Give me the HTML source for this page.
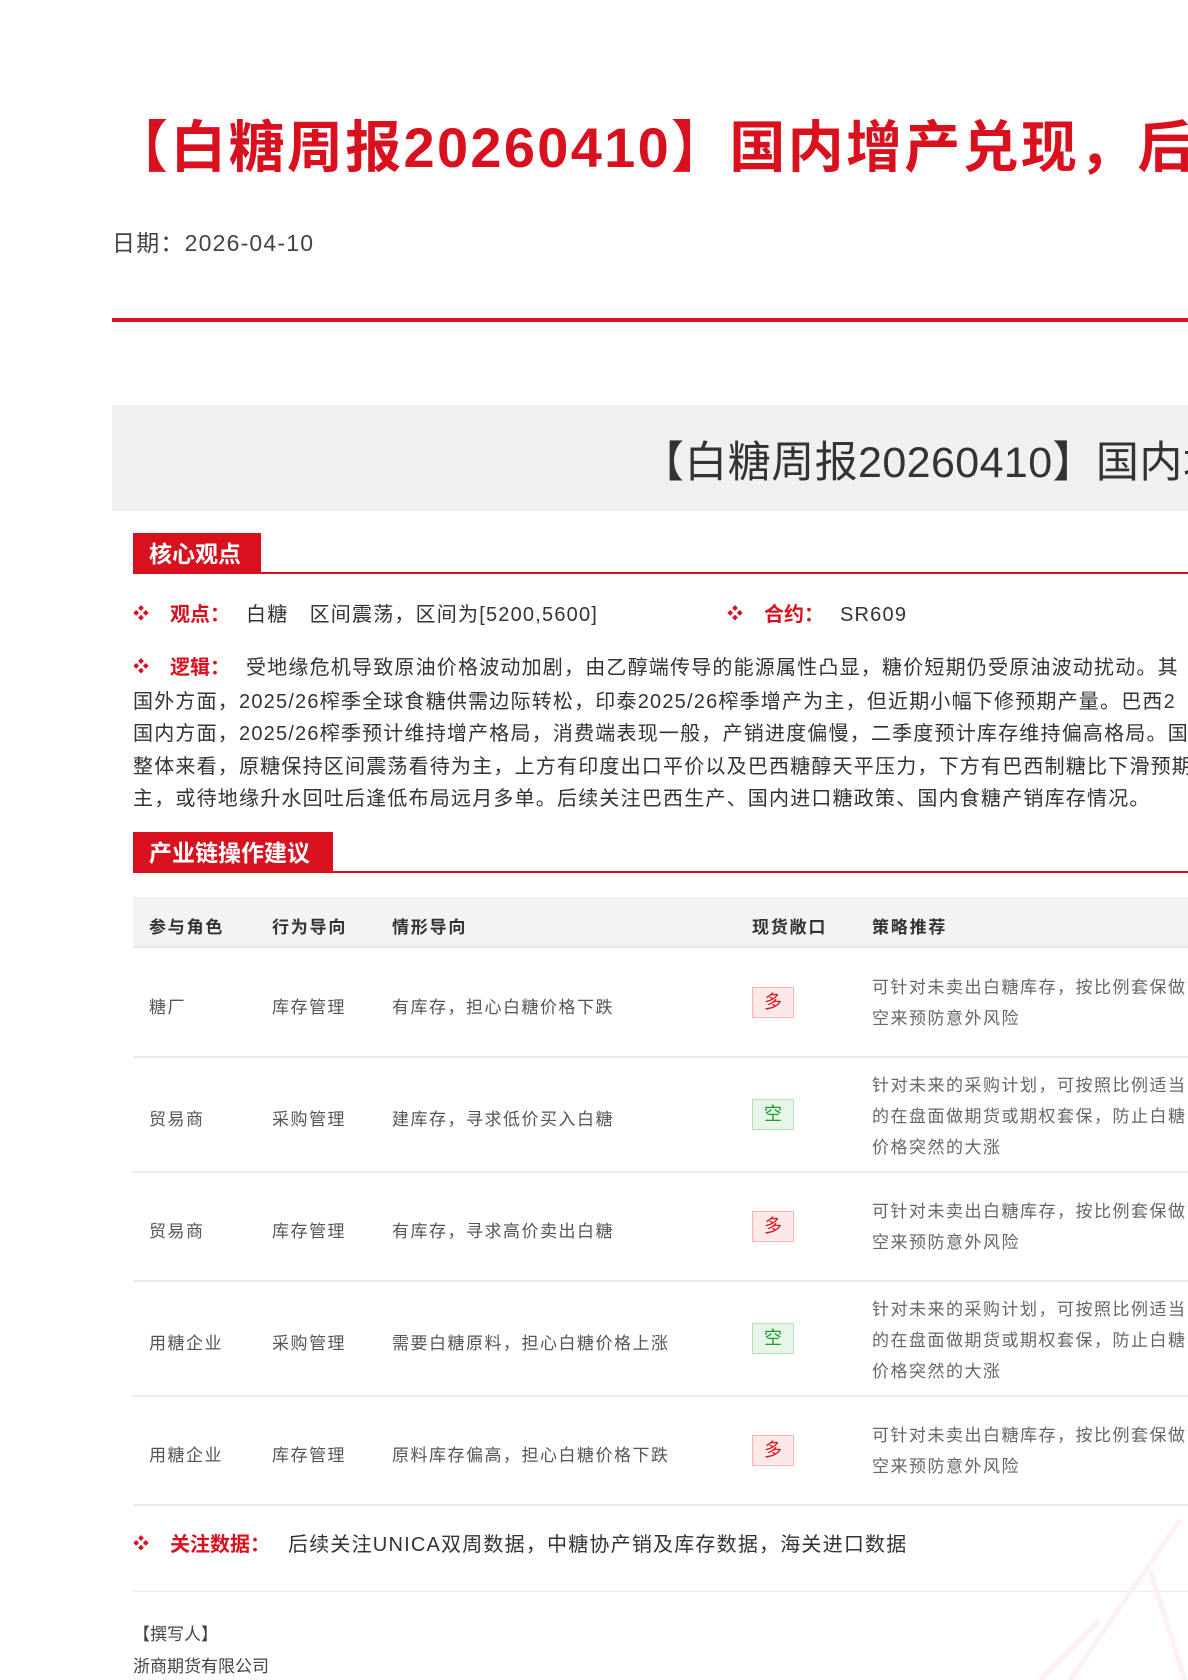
<!DOCTYPE html>
<html><head><meta charset="utf-8"><style>
*{margin:0;padding:0;box-sizing:border-box}
html,body{width:1188px;height:1680px;overflow:hidden;background:#fff}
body{position:relative;font-family:"Liberation Sans","Noto Sans CJK SC",sans-serif;color:#333}
.a{position:absolute;white-space:nowrap}
.title{left:112px;top:114px;font-size:56px;line-height:68px;font-weight:bold;color:#d9101e;letter-spacing:2.3px}
.date{left:112px;top:224px;font-size:23px;color:#444;letter-spacing:1.2px}
.rline{left:112px;top:318px;width:1100px;height:4px;background:#d9101e}
.gbox{left:112px;top:405px;width:1100px;height:106px;background:#f0f0f0}
.gtxt{left:641px;top:436px;font-size:43px;line-height:54px;color:#333;letter-spacing:0.4px}
.sec{left:133px;height:41px;background:#d9101e;color:#fff;font-size:23px;line-height:43px;padding-left:16px;font-weight:bold}
.secl{left:133px;width:1100px;height:2px;background:#d9101e}
.bul{color:#d9101e;font-size:16px;line-height:28px}
.lab{color:#d9101e;font-size:20px;font-weight:bold;line-height:28px}
.txt{font-size:20px;color:#333;line-height:28px;letter-spacing:1.2px}
.para{left:133px;top:652px;width:1100px;font-size:20px;line-height:32.3px;color:#333;letter-spacing:1.2px}
.th{top:897px;left:133px;width:1100px;height:51px;background:#f2f3f5;border-bottom:2px solid #e6e8eb}
.hd{font-size:17px;font-weight:bold;color:#333;top:913px;letter-spacing:1.8px}
.sep{left:133px;width:1100px;height:2px;background:#e8eaed}
.cell{font-size:17px;color:#555;letter-spacing:1.5px}
.st{font-size:17px;color:#666;line-height:31px;letter-spacing:1.5px}
.bd{width:42px;height:31px;font-size:18px;text-align:center;line-height:29px}
.red{background:#fde9e9;border:1px solid #f5b5b5;color:#e0101e}
.grn{background:#e8f6ea;border:1px solid #b3dfba;color:#1aa02c}
</style></head><body>
<div class="a title">【白糖周报20260410】国内增产兑现，后市关注进口利润变化</div>
<div class="a date">日期：2026-04-10</div>
<div class="a rline"></div>
<div class="a gbox"></div>
<div class="a gtxt">【白糖周报20260410】国内增产兑现，后市关注进口利润变化</div>

<div class="a sec" style="top:533px;width:128px">核心观点</div>
<div class="a secl" style="top:572px"></div>

<div class="a bul" style="left:133px;top:601px">❖</div>
<div class="a lab" style="left:170px;top:601px">观点：</div>
<div class="a txt" style="left:246px;top:601px">白糖　区间震荡，区间为[5200,5600]</div>
<div class="a bul" style="left:727px;top:601px">❖</div>
<div class="a lab" style="left:764px;top:601px">合约：</div>
<div class="a txt" style="left:840px;top:601px">SR609</div>

<div class="a bul" style="left:133px;top:654px">❖</div>
<div class="a lab" style="left:170px;top:654px">逻辑：</div>
<div class="a txt" style="left:246px;top:654px">受地缘危机导致原油价格波动加剧，由乙醇端传导的能源属性凸显，糖价短期仍受原油波动扰动。其</div>
<div class="a para" style="top:686px">国外方面，2025/26榨季全球食糖供需边际转松，印泰2025/26榨季增产为主，但近期小幅下修预期产量。巴西2<br>国内方面，2025/26榨季预计维持增产格局，消费端表现一般，产销进度偏慢，二季度预计库存维持偏高格局。国<br>整体来看，原糖保持区间震荡看待为主，上方有印度出口平价以及巴西糖醇天平压力，下方有巴西制糖比下滑预期<br>主，或待地缘升水回吐后逢低布局远月多单。后续关注巴西生产、国内进口糖政策、国内食糖产销库存情况。</div>

<div class="a sec" style="top:832px;width:200px">产业链操作建议</div>
<div class="a secl" style="top:871px"></div>

<div class="a th"></div>
<div class="a hd" style="left:149px">参与角色</div>
<div class="a hd" style="left:272px">行为导向</div>
<div class="a hd" style="left:392px">情形导向</div>
<div class="a hd" style="left:752px">现货敞口</div>
<div class="a hd" style="left:872px">策略推荐</div>

<div class="a cell" style="left:149px;top:993px">糖厂</div>
<div class="a cell" style="left:272px;top:993px">库存管理</div>
<div class="a cell" style="left:392px;top:993px">有库存，担心白糖价格下跌</div>
<div class="a bd red" style="left:752px;top:987px">多</div>
<div class="a st" style="left:872px;top:972px">可针对未卖出白糖库存，按比例套保做<br>空来预防意外风险</div>
<div class="a sep" style="top:1056px"></div>

<div class="a cell" style="left:149px;top:1105px">贸易商</div>
<div class="a cell" style="left:272px;top:1105px">采购管理</div>
<div class="a cell" style="left:392px;top:1105px">建库存，寻求低价买入白糖</div>
<div class="a bd grn" style="left:752px;top:1099px">空</div>
<div class="a st" style="left:872px;top:1070px">针对未来的采购计划，可按照比例适当<br>的在盘面做期货或期权套保，防止白糖<br>价格突然的大涨</div>
<div class="a sep" style="top:1171px"></div>

<div class="a cell" style="left:149px;top:1217px">贸易商</div>
<div class="a cell" style="left:272px;top:1217px">库存管理</div>
<div class="a cell" style="left:392px;top:1217px">有库存，寻求高价卖出白糖</div>
<div class="a bd red" style="left:752px;top:1211px">多</div>
<div class="a st" style="left:872px;top:1196px">可针对未卖出白糖库存，按比例套保做<br>空来预防意外风险</div>
<div class="a sep" style="top:1280px"></div>

<div class="a cell" style="left:149px;top:1329px">用糖企业</div>
<div class="a cell" style="left:272px;top:1329px">采购管理</div>
<div class="a cell" style="left:392px;top:1329px">需要白糖原料，担心白糖价格上涨</div>
<div class="a bd grn" style="left:752px;top:1323px">空</div>
<div class="a st" style="left:872px;top:1294px">针对未来的采购计划，可按照比例适当<br>的在盘面做期货或期权套保，防止白糖<br>价格突然的大涨</div>
<div class="a sep" style="top:1395px"></div>

<div class="a cell" style="left:149px;top:1441px">用糖企业</div>
<div class="a cell" style="left:272px;top:1441px">库存管理</div>
<div class="a cell" style="left:392px;top:1441px">原料库存偏高，担心白糖价格下跌</div>
<div class="a bd red" style="left:752px;top:1435px">多</div>
<div class="a st" style="left:872px;top:1420px">可针对未卖出白糖库存，按比例套保做<br>空来预防意外风险</div>
<div class="a sep" style="top:1504px"></div>

<div class="a bul" style="left:133px;top:1531px">❖</div>
<div class="a lab" style="left:170px;top:1531px">关注数据：</div>
<div class="a txt" style="left:288px;top:1531px">后续关注UNICA双周数据，中糖协产销及库存数据，海关进口数据</div>
<div class="a sep" style="top:1591px;height:1px"></div>

<div class="a" style="left:133px;top:1620px;font-size:17px;color:#444">【撰写人】</div>
<div class="a" style="left:133px;top:1652px;font-size:17px;color:#444">浙商期货有限公司</div>

<svg class="a" style="left:980px;top:1500px" width="208" height="180">
<path d="M200 20 L90 180 M170 70 L205 180 M60 180 L120 120" stroke="#fdf1f1" stroke-width="5" fill="none"/>
</svg>
</body></html>
